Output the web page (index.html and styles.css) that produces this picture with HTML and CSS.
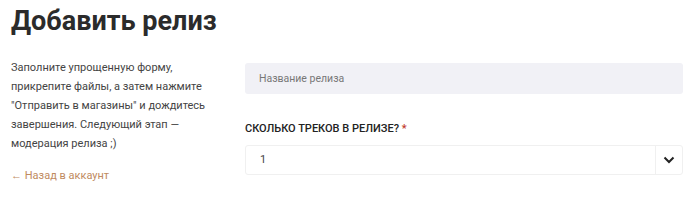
FILE: index.html
```html
<!DOCTYPE html>
<html>

<head>
    <title>Добавить релиз</title>
    <link rel="stylesheet" href="styles.css">
</head>

<body>
    <h1 class="title">Добавить релиз</h1>

    <div class="layout">
        <div class="aside">
            <p class="intro">Заполните упрощенную форму, прикрепите файлы, а затем нажмите "Отправить в магазины" и дождитесь завершения. Следующий этап — модерация релиза ;)</p>
            <a class="back" href="#">&larr; Назад в аккаунт</a>
        </div>

        <div class="form">
            <input class="field" type="text" placeholder="Название релиза">

            <label class="label">СКОЛЬКО ТРЕКОВ В РЕЛИЗЕ? <span class="req">*</span></label>
            <div class="select">
                <div class="value">1</div>
                <div class="arrow">
                    <svg width="12" height="8" viewBox="0 0 12 8">
                        <path d="M1.5 1.5 L6 6 L10.5 1.5" fill="none" stroke="#222" stroke-width="2" />
                    </svg>
                </div>
            </div>
        </div>
    </div>
</body>

</html>
```

FILE: styles.css
```css
body {
    margin: 0;
    padding: 0 17px 0 11px;
    background-color: #fff;
    font-family: Roboto, "Noto Sans", sans-serif;
    color: #333;
}

.title {
    margin: 0;
    padding-top: 3px;
    font-size: 27px;
    font-weight: 700;
    color: #2b2b2b;
    line-height: 36px;
}

.layout {
    display: grid;
    grid-template-columns: 234px 1fr;
    margin-top: 24px;
}

.intro {
    margin: 0;
    margin-top: -5px;
    width: 200px;
    font-size: 11px;
    line-height: 19px;
    color: #444;
}

.back {
    display: inline-block;
    margin-top: 16px;
    font-size: 11px;
    color: #c08a60;
    text-decoration: none;
}

.form {
    display: flex;
    flex-direction: column;
}

.field {
    box-sizing: border-box;
    height: 31px;
    padding: 0 14px;
    border: 0;
    border-radius: 3px;
    background-color: #f1f1f6;
    font-family: inherit;
    font-size: 10.5px;
    color: #333;
}

.field::placeholder {
    color: #777;
}

.label {
    margin-top: 28px;
    font-size: 11px;
    font-weight: 500;
    color: #222;
}

.req {
    color: #c0392b;
}

.select {
    display: flex;
    margin-top: 10px;
    height: 30px;
    border: 1px solid #f0f0f0;
    border-radius: 3px;
    box-sizing: border-box;
}

.value {
    flex: 1;
    padding-left: 14px;
    font-size: 11px;
    line-height: 28px;
    color: #444;
}

.arrow {
    width: 26px;
    display: flex;
    align-items: center;
    justify-content: center;
    border-left: 1px solid #f0f0f0;
}
```
